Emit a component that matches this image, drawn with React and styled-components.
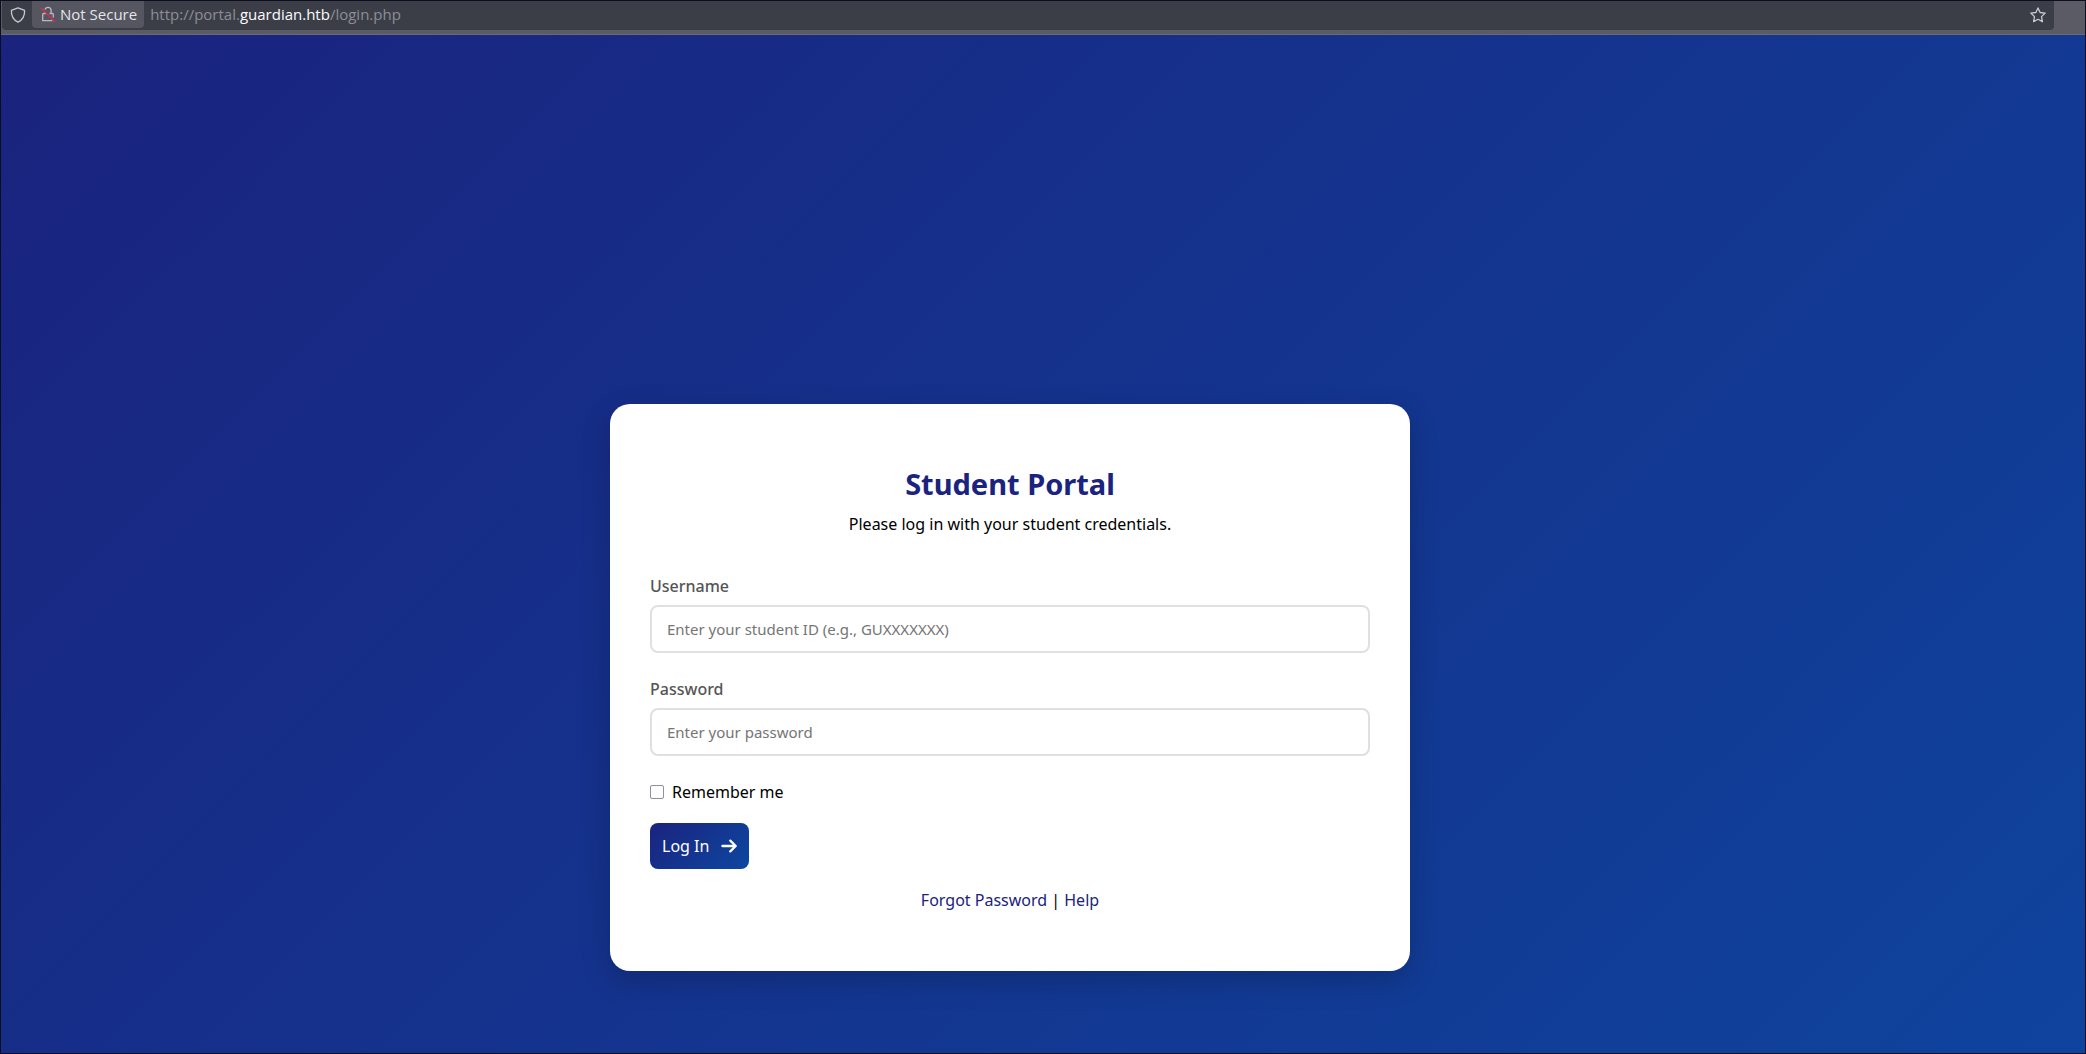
import styled, { createGlobalStyle } from "styled-components";

const App = () => {
  return (
    <>
      <GlobalStyle />
      <Window>
        <Toolbar>
          <AddressBar>
            <ShieldIcon viewBox="0 0 16 16">
              <path d="M8 .8 14.600 3.300c.3 5.600-1.900 9.600-6.600 11.900C3.300 12.900 1.100 8.900 1.400 3.300Z" />
            </ShieldIcon>
            <SecurityBtn type="button">
              <LockIcon viewBox="0 0 16 16">
                <path d="M5 3.700a3.100 3.100 0 0 1 6.100.4v3.400M5 7.500v-1M9.500 7.500h2.800a1 1 0 0 1 1 1v3M6 7.500H3.700a1 1 0 0 0-1 1v6.200h9.800" />
                <path className="strike" d="M1 2 15 16" />
              </LockIcon>
              Not Secure
            </SecurityBtn>
            <Url>
              http://portal.<b>guardian.htb</b>/login.php
            </Url>
            <StarBtn type="button" aria-label="Bookmark this page">
              <StarIcon viewBox="0 0 16 16">
                <path d="m8 .9 2.100 4.600 5.100.600-3.700 3.500.9 5L8 12.200l-4.400 2.400.9-5L.8 6.100l5.100-.6Z" />
              </StarIcon>
            </StarBtn>
          </AddressBar>
        </Toolbar>
        <Page>
          <Card>
            <Title>Student Portal</Title>
            <Subtitle>Please log in with your student credentials.</Subtitle>
            <form onSubmit={(e) => e.preventDefault()}>
              <Field>
                <Label htmlFor="username">Username</Label>
                <Input
                  id="username"
                  type="text"
                  placeholder="Enter your student ID (e.g., GUXXXXXXX)"
                />
              </Field>
              <Field>
                <Label htmlFor="password">Password</Label>
                <Input
                  id="password"
                  type="password"
                  placeholder="Enter your password"
                />
              </Field>
              <Remember>
                <Checkbox id="remember" type="checkbox" />
                <label htmlFor="remember">Remember me</label>
              </Remember>
              <LoginBtn type="submit">
                Log In
                <ArrowIcon viewBox="0 0 16 16">
                  <path d="M1.400 8h13M9.300 2.600 14.700 8 9.300 13.400" />
                </ArrowIcon>
              </LoginBtn>
            </form>
            <Links>
              <a href="#forgot">Forgot Password</a> | <a href="#help">Help</a>
            </Links>
          </Card>
        </Page>
      </Window>
    </>
  );
};

export default App;

const GlobalStyle = createGlobalStyle`
  * {
    box-sizing: border-box;
  }

  body {
    margin: 0;
    font-family: "Noto Sans", sans-serif;
    font-size: 16px;
    line-height: 22px;
  }
`;

const Window = styled.div`
  display: flex;
  flex-direction: column;
  min-height: 100vh;
  border: 1px solid #0c0f22;
`;

const Toolbar = styled.header`
  display: flex;
  height: 34px;
  padding: 0 31px 4px 1px;
  background: #5b5b66;
  border-bottom: 1px solid #6b6b70;
`;

const AddressBar = styled.div`
  display: flex;
  flex: 1;
  align-items: center;
  padding: 0 8px 2px;
  background: #3c3e47;
  border-radius: 0 0 4px 4px;
  color: #fbfbfe;
  font-family: "Open Sans", "Noto Sans", sans-serif;
  font-size: 15px;
`;

const ShieldIcon = styled.svg`
  width: 16px;
  height: 16px;
  margin-right: 6px;
  fill: none;
  stroke: #c8c8d2;
  stroke-width: 1.3;
  stroke-linejoin: round;
`;

const SecurityBtn = styled.button`
  display: flex;
  align-items: center;
  gap: 4px;
  height: 27px;
  padding: 0 7px 2px 8px;
  border: 0;
  border-radius: 0 0 4px 4px;
  background: #55565f;
  color: #e4e4ec;
  font: inherit;
`;

const LockIcon = styled.svg`
  width: 16px;
  height: 16px;
  fill: none;
  stroke: #b8b8c4;
  stroke-width: 1.3;
  stroke-linejoin: round;

  .strike {
    stroke: #e22850;
  }
`;

const Url = styled.span`
  flex: 1;
  padding: 0 0 2px 6px;
  color: #8d8d96;

  b {
    color: #fbfbfe;
    font-weight: 400;
  }
`;

const StarBtn = styled.button`
  display: flex;
  padding: 0;
  border: 0;
  background: none;
`;

const StarIcon = styled.svg`
  width: 16px;
  height: 16px;
  fill: none;
  stroke: #c8c8d2;
  stroke-width: 1.3;
  stroke-linejoin: round;
`;

const Page = styled.main`
  display: flex;
  flex: 1;
  justify-content: center;
  align-items: flex-end;
  padding: 40px 66px 82px 0;
  background: linear-gradient(135deg, #1a237e, #0d47a1) 0 0 / 100% 136%;
`;

const Card = styled.section`
  width: 100%;
  max-width: 800px;
  padding: 60px 40px;
  border-radius: 20px;
  background: #fff;
  box-shadow: 0 10px 30px rgba(0, 0, 0, 0.2);
`;

const Title = styled.h1`
  margin: 0 0 9px;
  color: #1a237e;
  font-size: 29px;
  line-height: 40px;
  text-align: center;
`;

const Subtitle = styled.p`
  margin: 0 0 40px;
  text-align: center;
`;

const Field = styled.div`
  margin-bottom: 25px;
`;

const Label = styled.label`
  display: block;
  margin-bottom: 8px;
  color: #555;
  font-weight: 500;
`;

const Input = styled.input`
  display: block;
  width: 100%;
  height: 48px;
  padding: 0 15px;
  border: 2px solid #e0e0e0;
  border-radius: 8px;
  font-family: inherit;
  font-size: 15px;

  &::placeholder {
    color: #757575;
  }
`;

const Remember = styled.div`
  display: flex;
  align-items: center;
  gap: 8px;
  margin-bottom: 20px;
`;

const Checkbox = styled.input`
  appearance: none;
  width: 14px;
  height: 14px;
  margin: 0;
  border: 1px solid #8f8f9d;
  border-radius: 2px;
  background: #fff;

  &:checked {
    background: #0d47a1;
  }
`;

const LoginBtn = styled.button`
  display: flex;
  align-items: center;
  gap: 12px;
  height: 46px;
  padding: 0 12px;
  border: 0;
  border-radius: 8px;
  background: linear-gradient(135deg, #1a237e, #0d47a1);
  color: #fff;
  font: inherit;
`;

const ArrowIcon = styled.svg`
  width: 16px;
  height: 16px;
  fill: none;
  stroke: #fff;
  stroke-width: 2.3;
  stroke-linecap: round;
  stroke-linejoin: round;
`;

const Links = styled.p`
  margin: 20px 0 0;
  text-align: center;

  a {
    color: #1a237e;
    text-decoration: none;
  }
`;
